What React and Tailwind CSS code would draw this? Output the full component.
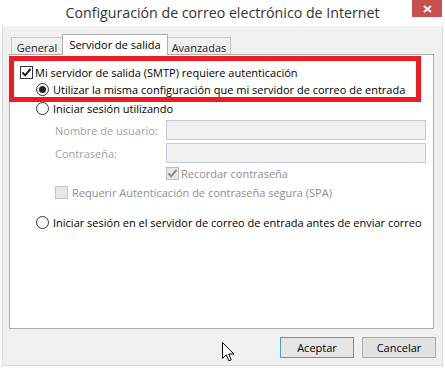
import React from "react";

const font = { fontFamily: "'Open Sans', 'Noto Sans', sans-serif" };

function Check({ disabled }) {
  return (
    <span
      className={`w-[13px] h-[13px] border flex items-center justify-center shrink-0 ${
        disabled ? "border-[#bcbcbc] bg-[#e6e6e6]" : "border-[#333] bg-white"
      }`}
    >
      <svg width="11" height="11" viewBox="0 0 11 11">
        <path
          d="M1.5 5.5 L4.2 8.3 L9.5 1.8"
          fill="none"
          stroke={disabled ? "#8a8a8a" : "#111"}
          strokeWidth="1.9"
        />
      </svg>
    </span>
  );
}

function Box({ disabled }) {
  return (
    <span
      className={`w-[13px] h-[13px] border shrink-0 ${
        disabled ? "border-[#c4c4c4] bg-[#e6e6e6]" : "border-[#333] bg-white"
      }`}
    />
  );
}

function Radio({ on }) {
  return (
    <span className="w-[13px] h-[13px] rounded-full border border-[#333] bg-white flex items-center justify-center shrink-0">
      {on && <span className="w-[7px] h-[7px] rounded-full bg-[#222]" />}
    </span>
  );
}

export default function App() {
  return (
    <div
      className="w-[445px] h-[368px] bg-white relative overflow-hidden text-[11px] leading-[15px] text-black whitespace-nowrap"
      style={font}
    >
      {/* title bar */}
      <div className="h-[26px] flex items-center justify-center relative">
        <span className="text-[14.2px] text-[#333] leading-none pt-[1px]">
          Configuración de correo electrónico de Internet
        </span>
        <div className="absolute right-[3px] top-0 w-[30px] h-[17px] bg-[#c75050] flex items-center justify-center">
          <svg width="9" height="8" viewBox="0 0 9 8">
            <path d="M1 1 L8 7 M8 1 L1 7" stroke="#fff" strokeWidth="2" />
          </svg>
        </div>
      </div>

      {/* client area */}
      <div className="mx-[2px] h-[340px] border-x border-b border-[#d9d9d9] bg-[#f0f0f0] flex flex-col">
        <div className="pl-[6px] pt-[8px]">
          {/* tabs */}
          <div className="flex items-end h-[20px] pl-[2px]">
            <div className="h-[17px] w-[51px] border-t border-l border-[#c8c8c8] bg-[#f0f0f0] flex items-center justify-center text-[#222] pt-[2px]">
              General
            </div>
            <div className="h-[21px] w-[106px] -mb-px relative z-10 border-t border-x border-[#adadad] bg-white flex items-start justify-center pt-[2px]">
              Servidor de salida
            </div>
            <div className="h-[17px] w-[63px] border-t border-r border-[#c8c8c8] bg-[#f0f0f0] flex items-center justify-center text-[#222] pt-[2px]">
              Avanzadas
            </div>
          </div>

          {/* panel */}
          <div className="w-[425px] h-[275px] border border-[#adadad] bg-white relative">
            <div className="flex flex-col pt-[9px]">
              <div className="h-[17px] flex items-center pl-[10px] gap-[2px]">
                <Check disabled={false} />
                <span>Mi servidor de salida (SMTP) requiere autenticación</span>
              </div>
              <div className="h-[17px] flex items-center pl-[26px] gap-[4px]">
                <Radio on />
                <span>Utilizar la misma configuración que mi servidor de correo de entrada</span>
              </div>
              <div className="h-[17px] mt-[2px] flex items-center pl-[26px] gap-[4px]">
                <Radio />
                <span>Iniciar sesión utilizando</span>
              </div>

              <div className="h-[20px] mt-[3px] flex items-center pl-[45px]">
                <span className="w-[111px] text-[#a0a0a0]">Nombre de usuario:</span>
                <span className="w-[260px] h-[20px] border border-[#c3ccd6] bg-[#f0f0f0]" />
              </div>
              <div className="h-[20px] mt-[3px] flex items-center pl-[45px]">
                <span className="w-[111px] text-[#a0a0a0]">Contraseña:</span>
                <span className="w-[260px] h-[20px] border border-[#c3ccd6] bg-[#f0f0f0]" />
              </div>

              <div className="h-[17px] mt-[2px] flex items-center pl-[156px] gap-[2px]">
                <Check disabled />
                <span className="text-[#8d8d8d]">Recordar contraseña</span>
              </div>
              <div className="h-[17px] mt-[2px] flex items-center pl-[45px] gap-[4px]">
                <Box disabled />
                <span className="text-[#8d8d8d]">Requerir Autenticación de contraseña segura (SPA)</span>
              </div>

              <div className="h-[17px] mt-[13px] flex items-center pl-[26px] gap-[4px]">
                <Radio />
                <span>Iniciar sesión en el servidor de correo de entrada antes de enviar correo</span>
              </div>
            </div>

            {/* red highlight annotation */}
            <div className="absolute left-[-1px] top-[1px] w-[412px] h-[46px] border-[5px] border-[#ed1c24] pointer-events-none" />
          </div>
        </div>

        {/* buttons */}
        <div className="flex justify-end gap-[8px] pr-[6px] mt-[8px]">
          <button className="w-[74px] h-[21px] border border-[#4a9ae0] bg-[#e5e5e5] flex items-center justify-center">
            Aceptar
          </button>
          <button className="w-[74px] h-[21px] border border-[#adadad] bg-[#e1e1e1] flex items-center justify-center">
            Cancelar
          </button>
        </div>
      </div>

      {/* mouse pointer */}
      <svg className="absolute left-[222px] top-[342px]" width="13" height="21" viewBox="0 0 13 21">
        <path
          d="M0.5 0.5 L0.5 16.5 L4.3 12.8 L6.8 18.8 L9.2 17.8 L6.7 12 L11.8 12 Z"
          fill="#fff"
          stroke="#000"
          strokeWidth="1"
        />
      </svg>
    </div>
  );
}
